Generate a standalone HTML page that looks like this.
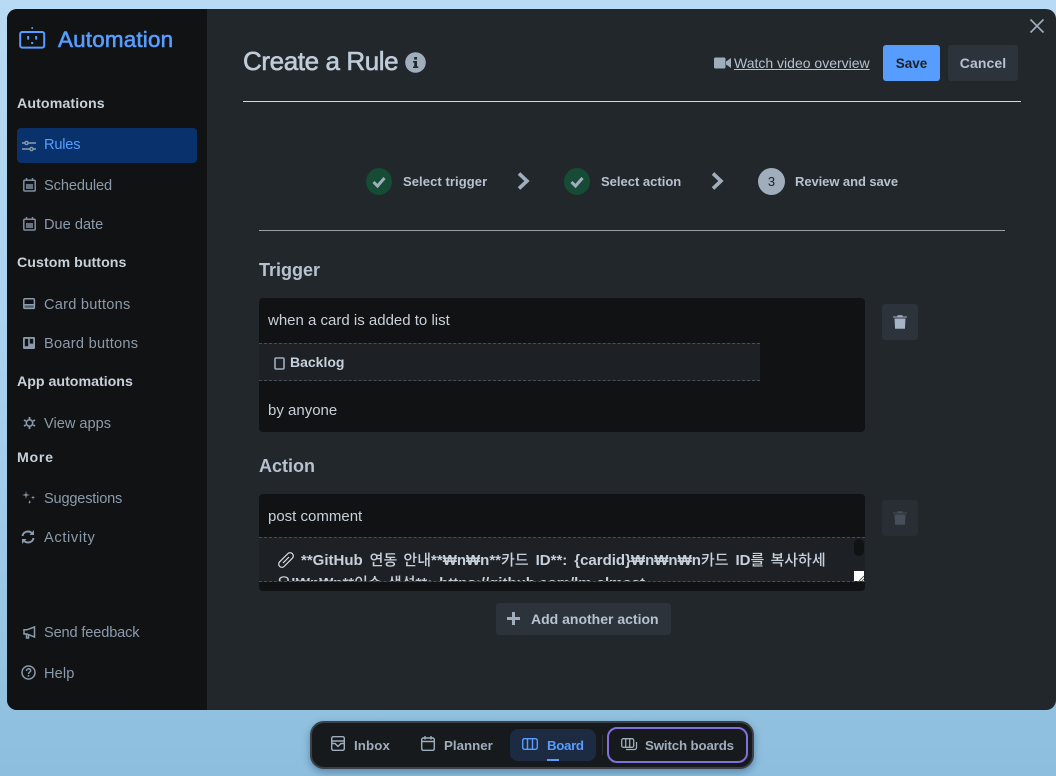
<!DOCTYPE html>
<html><head><meta charset="utf-8"><style>
*{box-sizing:border-box}
html,body{margin:0;padding:0;width:1056px;height:776px;overflow:hidden}
body{position:relative;background:linear-gradient(180deg,#b8daf5 0,#a8d0ee 50%,#8dbedd 100%);font-family:"Liberation Sans",sans-serif}
.a{position:absolute;white-space:nowrap}
.modal{position:absolute;left:7px;top:9px;width:1049px;height:701px;background:#22272b;border-radius:10px;overflow:hidden}
.side{position:absolute;left:7px;top:9px;width:200px;height:701px;background:#101214;border-radius:10px 0 0 10px}
.h{font-size:14.2px;font-weight:bold;color:#c7d1db;left:17px;line-height:18px}
.n{font-size:14.6px;color:#8c9bab;left:44px;line-height:18px}
svg{position:absolute;overflow:visible}
.st{font-size:13px;font-weight:bold;color:#b6c2cf;line-height:16px}
.box{position:absolute;left:259px;width:606px;background:#101214;border-radius:4px}
.t{font-size:15px;color:#c7d1db;left:268px;line-height:18px}
.nav{font-size:13.3px;font-weight:bold;color:#9fadbc;line-height:16px}
.k{font-family:"Noto Sans CJK KR","NanumGothic",sans-serif;font-weight:500}
</style></head><body>
<div class="modal"></div>
<div class="side"></div>

<svg style="left:19px;top:27px" width="27" height="23" viewBox="0 0 27 23" fill="none"><rect x="1.2" y="5" width="24" height="15.6" rx="2" stroke="#579dff" stroke-width="2"/><circle cx="13.2" cy="1" r="1" fill="#579dff"/><rect x="8.2" y="9" width="2" height="3.6" fill="#579dff"/><rect x="16.2" y="9" width="2" height="3.6" fill="#579dff"/><rect x="12.2" y="15" width="2" height="2" fill="#579dff"/></svg>
<div class="a" style="left:58px;top:26px;font-size:22.4px;line-height:28px;color:#579dff;-webkit-text-stroke:.6px #579dff;letter-spacing:.2px">Automation</div>

<div class="a h" style="top:95px;letter-spacing:.1px">Automations</div>
<div class="a" style="left:17px;top:128px;width:180px;height:35px;background:#09326c;border-radius:4px"></div>
<svg style="left:22px;top:140px" width="14" height="12" viewBox="0 0 14 12" fill="none" stroke="#8c9bab" stroke-width="1.4"><path d="M0 3h3M6 3h8M0 9h8M11 9h3"/><circle cx="4.5" cy="3" r="1.6"/><circle cx="9.5" cy="9" r="1.6"/></svg>
<div class="a n" style="top:136px;color:#579dff;letter-spacing:-.2px">Rules</div>

<svg style="left:23px;top:178px" width="13" height="14" viewBox="0 0 13 14" fill="none"><rect x=".8" y="2.2" width="11.4" height="10.8" rx="1" stroke="#7f8f9f" stroke-width="1.5"/><path d="M3.5 0v3M9.5 0v3" stroke="#7f8f9f" stroke-width="1.5"/><rect x="3" y="6" width="7" height="5" fill="#66737f"/></svg>
<div class="a n" style="top:177px;letter-spacing:-.1px">Scheduled</div>
<svg style="left:23px;top:217px" width="13" height="14" viewBox="0 0 13 14" fill="none"><rect x=".8" y="2.2" width="11.4" height="10.8" rx="1" stroke="#7f8f9f" stroke-width="1.5"/><path d="M3.5 0v3M9.5 0v3" stroke="#7f8f9f" stroke-width="1.5"/><rect x="3" y="6" width="7" height="5" fill="#66737f"/></svg>
<div class="a n" style="top:216px">Due date</div>

<div class="a h" style="top:254px;letter-spacing:.05px">Custom buttons</div>
<svg style="left:23px;top:298px" width="12" height="11" viewBox="0 0 12 11" fill="none"><rect x=".8" y=".8" width="10.6" height="9.6" rx="1.2" stroke="#8c9bab" stroke-width="1.5"/><rect x="1" y="6" width="10" height="1.5" fill="#8c9bab"/><rect x="1" y="7" width="10" height="3" fill="#8c9bab" opacity=".5"/></svg>
<div class="a n" style="top:296px;letter-spacing:.25px">Card buttons</div>
<svg style="left:23px;top:337px" width="12" height="12" viewBox="0 0 12 12"><rect width="12" height="12" rx="1.4" fill="#8c9bab"/><rect x="1.8" y="1.8" width="3.4" height="7.4" fill="#101214"/><rect x="6.8" y="1.8" width="3.4" height="4.8" fill="#101214"/></svg>
<div class="a n" style="top:335px;letter-spacing:.27px">Board buttons</div>

<div class="a h" style="top:373px;letter-spacing:0">App automations</div>
<svg style="left:23px;top:417px" width="13" height="12" viewBox="0 0 13 12" fill="none"><circle cx="6.5" cy="6" r="3.2" stroke="#8c9bab" stroke-width="1.6"/><path d="M6.5 0v2M6.5 10v2M1 3l1.8 1M10.2 8l1.8 1M1 9l1.8-1M10.2 4L12 3" stroke="#8c9bab" stroke-width="1.8"/></svg>
<div class="a n" style="top:415px">View apps</div>

<div class="a h" style="top:449px;letter-spacing:.7px">More</div>
<svg style="left:22px;top:491px" width="14" height="14" viewBox="0 0 14 14" fill="#8c9bab"><path d="M4 0l.7 3.3L8 4 4.7 4.7 4 8l-.7-3.3L0 4l3.3-.7zM11 4.500l.5 1.500 1.500.500-1.500.500-.5 1.500-.5-1.500L9 6.500l1.500-.500zM7.500 9l.5 1.500 1.500.500-1.500.500-.5 1.500-.5-1.500L5.500 11.500l1.500-.500z"/></svg>
<div class="a n" style="top:490px;letter-spacing:-.2px">Suggestions</div>
<svg style="left:21px;top:530px" width="14" height="14" viewBox="0 0 14 14" fill="none" stroke="#8c9bab" stroke-width="2"><path d="M1.500 6C2 3 4.500 1.500 7 1.500c2 0 3.500 1 4.500 2.500M12.500 8C12 11 9.500 12.500 7 12.500c-2 0-3.500-1-4.500-2.500"/><path d="M13 0v5H8.500z" fill="#8c9bab" stroke="none"/><path d="M1 14V9h4.500z" fill="#8c9bab" stroke="none"/></svg>
<div class="a n" style="top:529px;letter-spacing:.65px">Activity</div>

<svg style="left:23px;top:626px" width="13" height="13" viewBox="0 0 13 13" fill="none" stroke="#8c9bab" stroke-width="1.500"><path d="M11.500 1L4 3.800H1v4.200h3l7.500 3z"/><path d="M3.500 8v4h2V9"/></svg>
<div class="a n" style="top:624px;letter-spacing:-.15px">Send feedback</div>
<svg style="left:21px;top:665px" width="15" height="15" viewBox="0 0 15 15" fill="none"><circle cx="7.500" cy="7.500" r="6.500" stroke="#8c9bab" stroke-width="1.500"/><path d="M5.500 6c0-3 4.200-2.800 4.200-.4 0 1.500-2.200 1.500-2.200 3.400" stroke="#8c9bab" stroke-width="1.500"/><rect x="6.700" y="10" width="1.600" height="1.600" fill="#8c9bab"/></svg>
<div class="a n" style="top:665px;letter-spacing:.1px">Help</div>

<!-- header -->
<div class="a" style="left:243px;top:45px;font-size:26px;line-height:32px;color:#c0ccd8;-webkit-text-stroke:.6px #c0ccd8;letter-spacing:-.4px">Create a Rule</div>
<svg style="left:405px;top:52px" width="21" height="21" viewBox="0 0 21 21"><circle cx="10.500" cy="10.500" r="10.300" fill="#9fadbc"/><rect x="9.200" y="5" width="2.800" height="2.600" fill="#22272b"/><path d="M8 9h4v5.500h1.300v1.500H8v-1.500h1.200V10.500H8z" fill="#22272b"/></svg>
<div class="a" style="left:243px;top:101px;width:778px;height:1px;background:#d3d8dd"></div>

<svg style="left:714px;top:57px" width="17" height="12" viewBox="0 0 17 12" fill="#9fadbc"><rect y=".5" width="11.500" height="11" rx="1.500"/><path d="M12 4.500l5-3.500v10l-5-3.500z"/></svg>
<div class="a" style="left:734px;top:55px;font-size:14px;line-height:16px;color:#b6c2cf;text-decoration:underline">Watch video overview</div>
<div class="a" style="left:883px;top:45px;width:57px;height:36px;background:#579dff;border-radius:3px;color:#1d2125;font-size:13.500px;font-weight:bold;line-height:37px;text-align:center">Save</div>
<div class="a" style="left:948px;top:45px;width:70px;height:36px;background:#2c333a;border-radius:3px;color:#b6c2cf;font-size:14px;font-weight:bold;line-height:36px;text-align:center;letter-spacing:.1px">Cancel</div>
<svg style="left:1030px;top:19px" width="14" height="14" viewBox="0 0 14 14" stroke="#9fadbc" stroke-width="1.600" fill="none"><path d="M.5.500l13 13M13.500.500l-13 13"/></svg>

<!-- steps -->
<svg style="left:366px;top:168px" width="26" height="27" viewBox="0 0 26 27"><ellipse cx="13" cy="13.500" rx="13" ry="13.500" fill="#164b35"/><path d="M7.500 14l4 4 7-8" fill="none" stroke="#9fadbc" stroke-width="3"/></svg>
<div class="a st" style="left:403px;top:174px;letter-spacing:.08px">Select trigger</div>
<svg style="left:517px;top:172px" width="13" height="18" viewBox="0 0 13 18"><path d="M2 1.500l8 7.500-8 7.500" fill="none" stroke="#9fadbc" stroke-width="3.600"/></svg>
<svg style="left:564px;top:168px" width="26" height="27" viewBox="0 0 26 27"><ellipse cx="13" cy="13.500" rx="13" ry="13.500" fill="#164b35"/><path d="M7.500 14l4 4 7-8" fill="none" stroke="#9fadbc" stroke-width="3"/></svg>
<div class="a st" style="left:601px;top:174px;letter-spacing:0">Select action</div>
<svg style="left:711px;top:172px" width="13" height="18" viewBox="0 0 13 18"><path d="M2 1.500l8 7.500-8 7.500" fill="none" stroke="#9fadbc" stroke-width="3.600"/></svg>
<div class="a" style="left:758px;top:168px;width:27px;height:27px;border-radius:50%;background:#9fadbc;color:#1d2125;font-size:13px;line-height:27px;text-align:center">3</div>
<div class="a st" style="left:795px;top:174px;letter-spacing:-.07px">Review and save</div>
<div class="a" style="left:259px;top:230px;width:746px;height:1px;background:#9a9fa4"></div>

<!-- trigger -->
<div class="a" style="left:259px;top:260px;font-size:18px;line-height:21px;font-weight:bold;color:#b6c2cf">Trigger</div>
<div class="box" style="top:298px;height:134px"></div>
<div class="a t" style="top:312px">when a card is added to list</div>
<div class="a" style="left:259px;top:343px;width:501px;height:38px;background:#1d2125;border-top:1px dashed #454f59;border-bottom:1px dashed #454f59"></div>
<svg style="left:274px;top:357px" width="11" height="13" viewBox="0 0 11 13" fill="none"><rect x="1" y="1" width="9" height="11" rx="1.200" stroke="#9fadbc" stroke-width="1.600"/></svg>
<div class="a" style="left:290px;top:354px;font-size:14px;line-height:16px;font-weight:bold;color:#c7d1db">Backlog</div>
<div class="a t" style="top:402px">by anyone</div>
<div class="a" style="left:882px;top:304px;width:36px;height:36px;background:#2c333a;border-radius:3px"></div>
<svg style="left:893px;top:315px" width="14" height="14" viewBox="0 0 14 14" fill="#a6b5c5"><path d="M0 1.500h4.500V.2h5v1.300H14v1H0zM1.500 3.500h11l-.6 10.300H2.100z"/></svg>

<!-- action -->
<div class="a" style="left:259px;top:456px;font-size:18px;line-height:21px;font-weight:bold;color:#b6c2cf">Action</div>
<div class="box" style="top:494px;height:97px"></div>
<div class="a t" style="top:508px">post comment</div>
<div class="a" style="left:259px;top:537px;width:606px;height:45px;background:#1d2125;border-top:1px dashed #454f59;border-bottom:1px dashed #454f59;overflow:hidden">
 <div class="a" style="left:18px;top:11px;width:576px;font-size:15px;line-height:22px;font-weight:bold;color:#c7d1db;text-indent:24px;word-spacing:2.800px">**GitHub <span class="k">연동 안내</span>**₩n₩n**<span class="k">카드</span> ID**: {cardid}₩n₩n₩n<span class="k">카드</span> ID<span class="k">를 복사하세</span><br><span class="k">요</span>!₩n₩n**<span class="k">이슈 생성</span>**: https://github.com/lm-almost-</div>
 <div class="a" style="left:595px;top:0;width:11px;height:43px;background:#1d2125"></div>
 <div class="a" style="left:595px;top:1px;width:10px;height:17px;background:#101214;border-radius:5px"></div>
 <div class="a" style="left:595px;top:33px;width:10px;height:10px;background:#fff"></div>
 <svg style="left:600px;top:38px" width="5" height="5" viewBox="0 0 5 5" stroke="#333" stroke-width=".8"><path d="M0 5l5-5M3 5l2-2"/></svg>
</div>
<svg style="left:278px;top:552px" width="16" height="16" viewBox="0 0 16 16" fill="none" stroke="#dfe1e6" stroke-width="1.200"><rect x="-1" y="4.800" width="18" height="6.400" rx="3.200" transform="rotate(-45 8 8)"/><path d="M5 11l6-6" /></svg>
<div class="a" style="left:882px;top:500px;width:36px;height:36px;background:#282e33;border-radius:3px"></div>
<svg style="left:893px;top:511px" width="14" height="14" viewBox="0 0 14 14" fill="#454f59"><path d="M0 1.500h4.500V.2h5v1.300H14v1H0zM1.500 3.500h11l-.6 10.300H2.100z"/></svg>

<div class="a" style="left:496px;top:603px;width:175px;height:32px;background:#2c333a;border-radius:3px"></div>
<svg style="left:507px;top:612px" width="13" height="13" viewBox="0 0 13 13" fill="#9fadbc"><path d="M5 0h3v5h5v3H8v5H5V8H0V5h5z"/></svg>
<div class="a" style="left:531px;top:611px;font-size:14px;line-height:16px;font-weight:bold;color:#b6c2cf">Add another action</div>

<!-- bottom nav -->
<div class="a" style="left:310px;top:721px;width:444px;height:48px;background:#161a1d;border:2px solid #3b4148;border-radius:14px;box-shadow:0 3px 8px rgba(9,30,66,.35)"></div>
<svg style="left:331px;top:736px" width="14" height="15" viewBox="0 0 14 15" fill="none" stroke="#9fadbc" stroke-width="1.400"><rect x=".7" y=".7" width="12.600" height="13.600" rx="1.600"/><path d="M1 5h12M.7 7.500h3.300l3 3 3-3h3.300"/></svg>
<div class="a nav" style="left:354px;top:738px;letter-spacing:.1px">Inbox</div>
<svg style="left:421px;top:736px" width="14" height="15" viewBox="0 0 14 15" fill="none" stroke="#9fadbc" stroke-width="1.400"><rect x=".7" y="2" width="12.600" height="12.300" rx="1.600"/><path d="M1 5.500h12M4 0v3.500M10 0v3.500"/></svg>
<div class="a nav" style="left:444px;top:738px">Planner</div>
<div class="a" style="left:510px;top:729px;width:86px;height:32px;background:#1c2b41;border-radius:8px"></div>
<svg style="left:522px;top:738px" width="16" height="12" viewBox="0 0 16 12" fill="none" stroke="#579dff" stroke-width="1.400"><rect x=".7" y=".7" width="14.600" height="10.600" rx="1.800"/><path d="M5.500 1v10M10.500 1v10"/></svg>
<div class="a nav" style="left:547px;top:738px;color:#579dff;letter-spacing:-.35px">Board</div>
<div class="a" style="left:547px;top:759px;width:12px;height:2px;background:#579dff"></div>
<div class="a" style="left:602px;top:735px;width:1px;height:20px;background:#2c333a"></div>
<div class="a" style="left:607px;top:727px;width:141px;height:36px;border:2px solid #8270db;border-radius:10px"></div>
<svg style="left:621px;top:738px" width="17" height="13" viewBox="0 0 17 13" fill="none" stroke="#9fadbc" stroke-width="1.300"><rect x=".7" y=".7" width="12" height="8.600" rx="1.600"/><path d="M4.700 1v8M8.700 1v8M15.500 4v5.500a2 2 0 0 1-2 2H5"/></svg>
<div class="a nav" style="left:645px;top:738px;letter-spacing:-.15px">Switch boards</div>
</body></html>
